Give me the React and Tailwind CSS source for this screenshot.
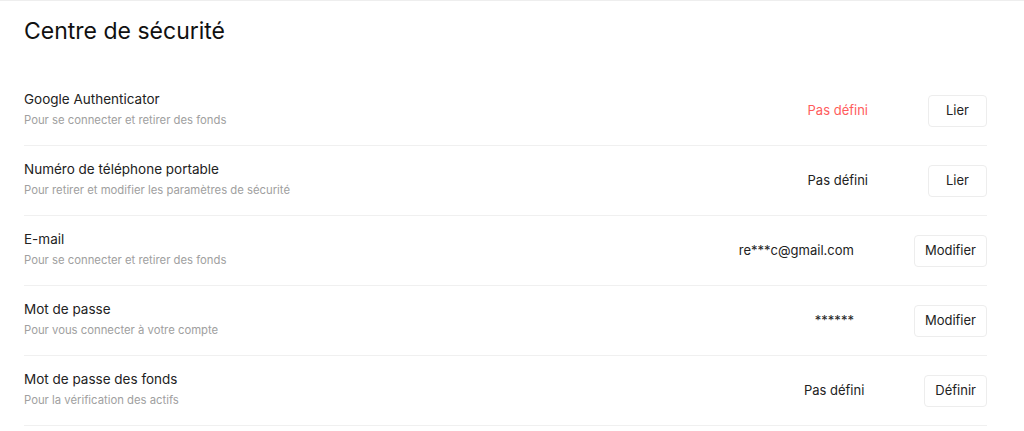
export default function App() {
  const rows = [
    { t: "Google Authenticator", s: "Pour se connecter et retirer des fonds", v: "Pas défini", red: true, b: "Lier" },
    { t: "Numéro de téléphone portable", s: "Pour retirer et modifier les paramètres de sécurité", v: "Pas défini", b: "Lier" },
    { t: "E-mail", s: "Pour se connecter et retirer des fonds", v: "re***c@gmail.com", b: "Modifier" },
    { t: "Mot de passe", s: "Pour vous connecter à votre compte", v: "******", b: "Modifier" },
    { t: "Mot de passe des fonds", s: "Pour la vérification des actifs", v: "Pas défini", b: "Définir" },
  ];
  return (
    <div className="w-[1024px] h-[431px] bg-white border-t border-[#eeeeee] overflow-hidden" style={{ fontFamily: "Inter, 'Noto Sans', sans-serif" }}>
      <div className="pl-6 pr-[37px]">
        <h1 className="text-[23px] leading-[30px] text-[#111] pt-[15px] pb-[30px] font-normal">Centre de sécurité</h1>
        <div>
          {rows.map((r, i) => (
            <div key={i} className="flex items-center h-[70px] border-b border-[#f0f0f0]">
              <div className="flex-1 flex flex-col pb-[3px]">
                <div className="text-[13.5px] leading-[21px] text-[#222]">{r.t}</div>
                <div className="text-[11.3px] leading-[20px] text-[#a0a0a0]">{r.s}</div>
              </div>
              <div className={"text-[13px] mr-[60px] " + (r.red ? "text-[#ff5c5c]" : "text-[#222]")}>{r.v}</div>
              <button className="h-[32px] min-w-[59px] px-[10px] rounded-[4px] border border-[#ededed] bg-white text-[13px] text-[#222]">{r.b}</button>
            </div>
          ))}
        </div>
      </div>
    </div>
  );
}
